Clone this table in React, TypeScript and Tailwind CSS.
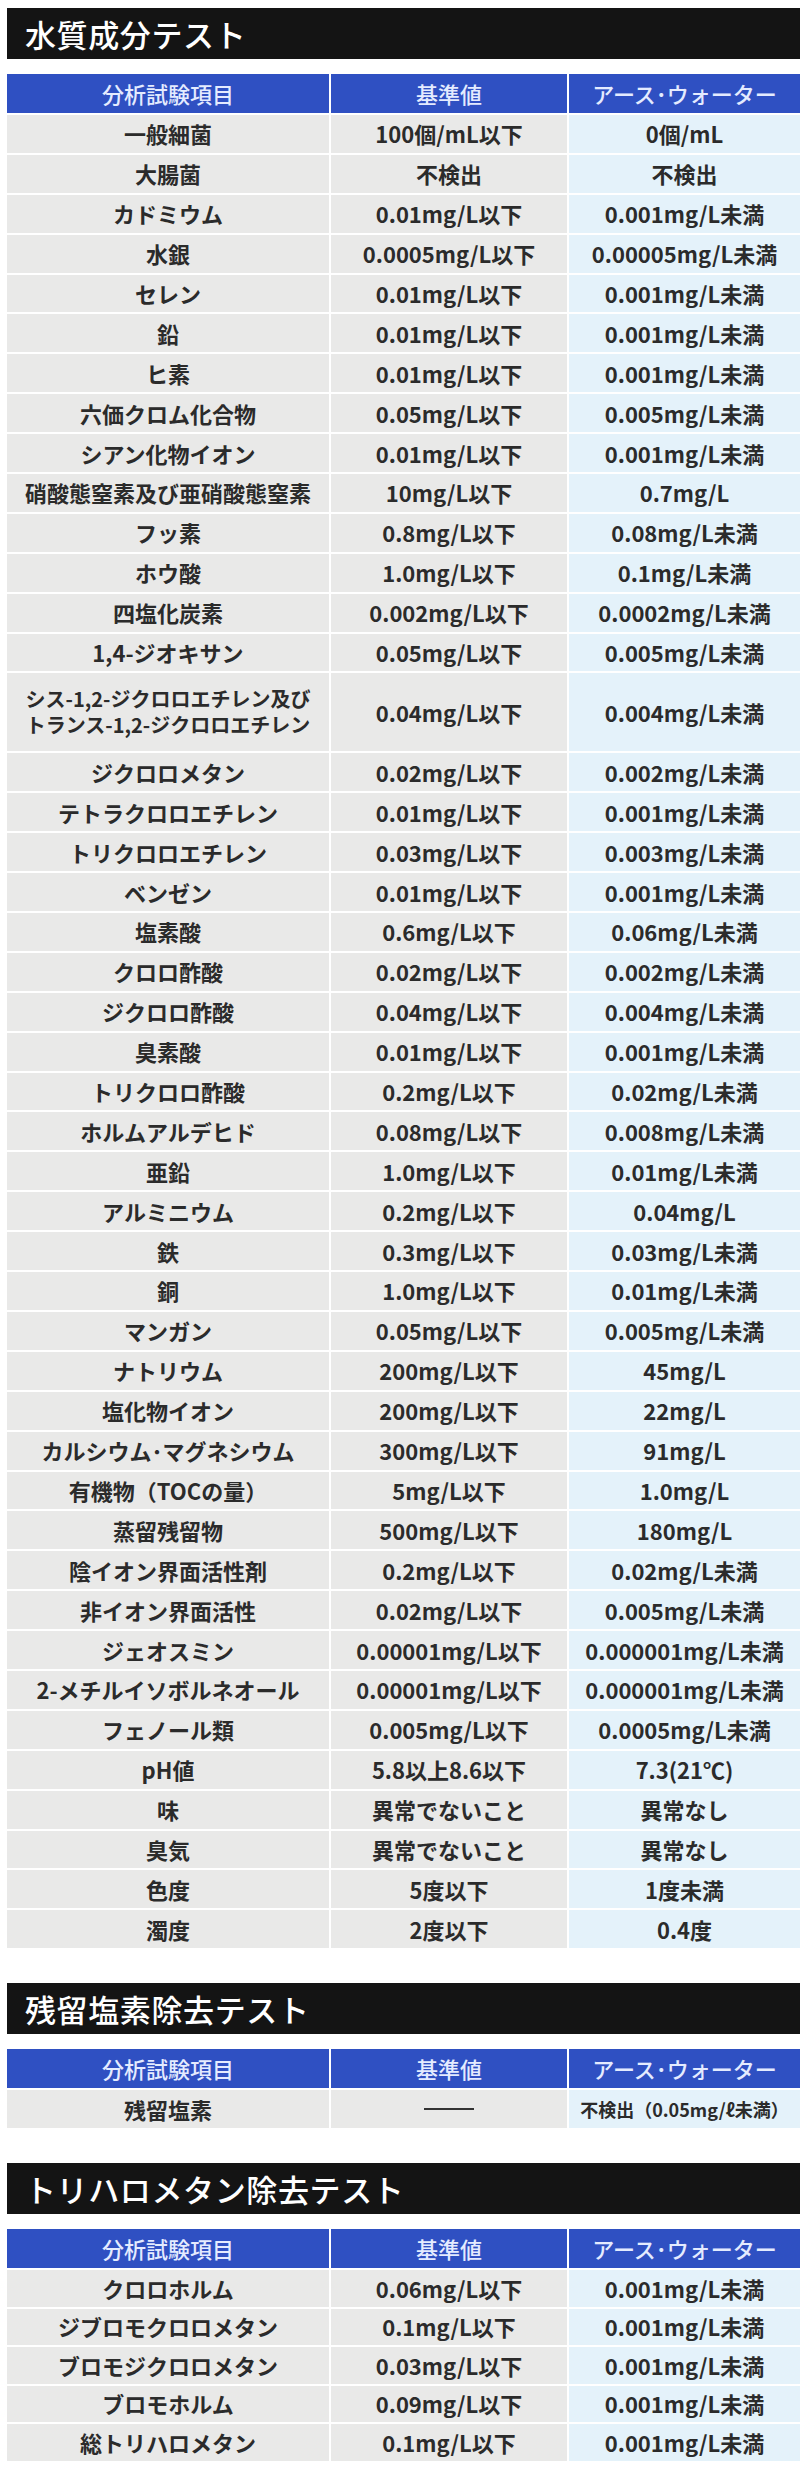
import type { ReactNode } from "react";

type Row = { item: ReactNode; standard: string; earth: string; tall?: boolean };

const waterRows: Row[] = [
  { item: "一般細菌", standard: "100個/mL以下", earth: "0個/mL" },
  { item: "大腸菌", standard: "不検出", earth: "不検出" },
  { item: "カドミウム", standard: "0.01mg/L以下", earth: "0.001mg/L未満" },
  { item: "水銀", standard: "0.0005mg/L以下", earth: "0.00005mg/L未満" },
  { item: "セレン", standard: "0.01mg/L以下", earth: "0.001mg/L未満" },
  { item: "鉛", standard: "0.01mg/L以下", earth: "0.001mg/L未満" },
  { item: "ヒ素", standard: "0.01mg/L以下", earth: "0.001mg/L未満" },
  { item: "六価クロム化合物", standard: "0.05mg/L以下", earth: "0.005mg/L未満" },
  { item: "シアン化物イオン", standard: "0.01mg/L以下", earth: "0.001mg/L未満" },
  { item: "硝酸態窒素及び亜硝酸態窒素", standard: "10mg/L以下", earth: "0.7mg/L" },
  { item: "フッ素", standard: "0.8mg/L以下", earth: "0.08mg/L未満" },
  { item: "ホウ酸", standard: "1.0mg/L以下", earth: "0.1mg/L未満" },
  { item: "四塩化炭素", standard: "0.002mg/L以下", earth: "0.0002mg/L未満" },
  { item: "1,4-ジオキサン", standard: "0.05mg/L以下", earth: "0.005mg/L未満" },
  {
    item: (
      <>
        シス-1,2-ジクロロエチレン及び
        <br />
        トランス-1,2-ジクロロエチレン
      </>
    ),
    standard: "0.04mg/L以下",
    earth: "0.004mg/L未満",
    tall: true,
  },
  { item: "ジクロロメタン", standard: "0.02mg/L以下", earth: "0.002mg/L未満" },
  { item: "テトラクロロエチレン", standard: "0.01mg/L以下", earth: "0.001mg/L未満" },
  { item: "トリクロロエチレン", standard: "0.03mg/L以下", earth: "0.003mg/L未満" },
  { item: "ベンゼン", standard: "0.01mg/L以下", earth: "0.001mg/L未満" },
  { item: "塩素酸", standard: "0.6mg/L以下", earth: "0.06mg/L未満" },
  { item: "クロロ酢酸", standard: "0.02mg/L以下", earth: "0.002mg/L未満" },
  { item: "ジクロロ酢酸", standard: "0.04mg/L以下", earth: "0.004mg/L未満" },
  { item: "臭素酸", standard: "0.01mg/L以下", earth: "0.001mg/L未満" },
  { item: "トリクロロ酢酸", standard: "0.2mg/L以下", earth: "0.02mg/L未満" },
  { item: "ホルムアルデヒド", standard: "0.08mg/L以下", earth: "0.008mg/L未満" },
  { item: "亜鉛", standard: "1.0mg/L以下", earth: "0.01mg/L未満" },
  { item: "アルミニウム", standard: "0.2mg/L以下", earth: "0.04mg/L" },
  { item: "鉄", standard: "0.3mg/L以下", earth: "0.03mg/L未満" },
  { item: "銅", standard: "1.0mg/L以下", earth: "0.01mg/L未満" },
  { item: "マンガン", standard: "0.05mg/L以下", earth: "0.005mg/L未満" },
  { item: "ナトリウム", standard: "200mg/L以下", earth: "45mg/L" },
  { item: "塩化物イオン", standard: "200mg/L以下", earth: "22mg/L" },
  { item: "カルシウム･マグネシウム", standard: "300mg/L以下", earth: "91mg/L" },
  { item: "有機物（TOCの量）", standard: "5mg/L以下", earth: "1.0mg/L" },
  { item: "蒸留残留物", standard: "500mg/L以下", earth: "180mg/L" },
  { item: "陰イオン界面活性剤", standard: "0.2mg/L以下", earth: "0.02mg/L未満" },
  { item: "非イオン界面活性", standard: "0.02mg/L以下", earth: "0.005mg/L未満" },
  { item: "ジェオスミン", standard: "0.00001mg/L以下", earth: "0.000001mg/L未満" },
  { item: "2-メチルイソボルネオール", standard: "0.00001mg/L以下", earth: "0.000001mg/L未満" },
  { item: "フェノール類", standard: "0.005mg/L以下", earth: "0.0005mg/L未満" },
  { item: "pH値", standard: "5.8以上8.6以下", earth: "7.3(21℃)" },
  { item: "味", standard: "異常でないこと", earth: "異常なし" },
  { item: "臭気", standard: "異常でないこと", earth: "異常なし" },
  { item: "色度", standard: "5度以下", earth: "1度未満" },
  { item: "濁度", standard: "2度以下", earth: "0.4度" },
];

const chlorineRows: Row[] = [
  { item: "残留塩素", standard: "——", earth: "不検出（0.05mg/ℓ未満）" },
];

const thmRows: Row[] = [
  { item: "クロロホルム", standard: "0.06mg/L以下", earth: "0.001mg/L未満" },
  { item: "ジブロモクロロメタン", standard: "0.1mg/L以下", earth: "0.001mg/L未満" },
  { item: "ブロモジクロロメタン", standard: "0.03mg/L以下", earth: "0.001mg/L未満" },
  { item: "ブロモホルム", standard: "0.09mg/L以下", earth: "0.001mg/L未満" },
  { item: "総トリハロメタン", standard: "0.1mg/L以下", earth: "0.001mg/L未満" },
];

const SectionTitle = ({ children }: { children: ReactNode }) => (
  <div className="ml-[7px] h-[51px] bg-[#141414] flex items-center pl-[18px]">
    <h2 className="text-[31px] leading-none font-medium text-white tracking-[0.02em]">
      {children}
    </h2>
  </div>
);

const ResultTable = ({ rows, compact }: { rows: Row[]; compact?: boolean }) => (
  <div className="ml-[7px] mt-[15px] grid grid-cols-[322px_236px_1fr] gap-x-[2px] gap-y-[2px]">
    {/* header */}
    {["分析試験項目", "基準値", "アース･ウォーター"].map((h) => (
      <div
        key={h}
        className="h-[39px] bg-[#2f50c2] flex items-center justify-center text-[22px] text-[#e4ebff] font-medium"
      >
        {h}
      </div>
    ))}
    {rows.map((r, i) => (
      <Cells key={i} row={r} compact={compact} />
    ))}
  </div>
);

const Cells = ({ row, compact }: { row: Row; compact?: boolean }) => {
  const h = row.tall ? "h-[78px]" : compact ? "h-[36.5px]" : "h-[37.9px]";
  const small = row.earth.startsWith("不検出（");
  return (
    <>
      <div
        className={`${h} bg-[#e9e9e8] flex items-center justify-center text-center text-[#2b2b2b] font-semibold ${
          row.tall ? "text-[20px] leading-[1.3]" : "text-[22px]"
        }`}
      >
        {row.item}
      </div>
      <div className={`${h} bg-[#e9e9e8] flex items-center justify-center text-[22px] text-[#2b2b2b] font-semibold`}>
        {row.standard === "——" ? <span className="block w-[50px] h-[2px] bg-[#333]" /> : row.standard}
      </div>
      <div
        className={`${h} bg-[#e4f2fa] flex items-center justify-center text-[#2b2b2b] font-semibold ${
          small ? "text-[18px]" : "text-[22px]"
        }`}
      >
        {row.earth}
      </div>
    </>
  );
};

export default function App() {
  return (
    <div
      className="w-[800px] h-[2466px] overflow-hidden bg-white pt-[8px]"
      style={{ fontFamily: '"Noto Sans CJK JP", "Noto Sans", sans-serif' }}
    >
      <section>
        <SectionTitle>水質成分テスト</SectionTitle>
        <ResultTable rows={waterRows} />
      </section>
      <section className="mt-[35px]">
        <SectionTitle>残留塩素除去テスト</SectionTitle>
        <ResultTable rows={chlorineRows} />
      </section>
      <section className="mt-[35px]">
        <SectionTitle>トリハロメタン除去テスト</SectionTitle>
        <ResultTable rows={thmRows} compact />
      </section>
    </div>
  );
}
